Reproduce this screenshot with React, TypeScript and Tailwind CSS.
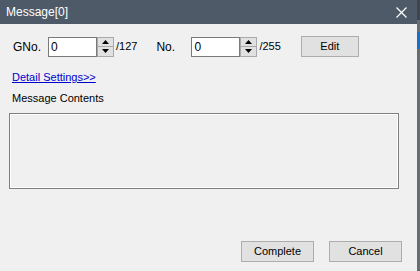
import { useState } from 'react';

function Spinner() {
  return (
    <div className="flex h-[20px] w-[17px] flex-col border border-[#a9a9a9] bg-[#e1e1e1]">
      <div className="flex flex-1 items-center justify-center border-b border-[#a9a9a9]">
        <svg width="7" height="4" viewBox="0 0 7 4">
          <path d="M3.5 0 L7 4 L0 4 Z" fill="#000" />
        </svg>
      </div>
      <div className="flex flex-1 items-center justify-center">
        <svg width="7" height="4" viewBox="0 0 7 4">
          <path d="M0 0 L7 0 L3.5 4 Z" fill="#000" />
        </svg>
      </div>
    </div>
  );
}

function NumberField({ value, max }: { value: string; max: number }) {
  return (
    <div className="flex items-center">
      <div className="flex h-[20px] w-[49px] items-center border border-[#7a7a7a] bg-white pl-[2px] text-[12px]">
        {value}
      </div>
      <Spinner />
      <span className="ml-[2px]">/{max}</span>
    </div>
  );
}

function WinButton({ label, width }: { label: string; width: string }) {
  return (
    <button
      className={`${width} flex h-[21px] items-center justify-center border border-[#adadad] bg-[#e1e1e1] text-black`}
    >
      {label}
    </button>
  );
}

export default function App() {
  const [gno] = useState('0');
  const [no] = useState('0');

  return (
    <div
      className="flex h-[271px] w-[420px] text-[11px] text-black"
      style={{ fontFamily: '"Liberation Sans", Arial, sans-serif' }}
    >
      <div className="flex w-[417px] flex-col bg-[#f0f0f0]">
        {/* Title bar */}
        <div className="flex h-[24px] items-center justify-between bg-[#4f5a68] pl-[6px] pr-[10px] text-[12px] text-white">
          <span>Message[0]</span>
          <svg width="11" height="11" viewBox="0 0 11 11">
            <path d="M0.5 0.5 L10.5 10.5 M10.5 0.5 L0.5 10.5" stroke="#fff" strokeWidth="1.2" />
          </svg>
        </div>

        {/* Body */}
        <div className="flex flex-1 flex-col pl-[12px] pr-[15px]">
          <div className="mt-[12px] flex items-center">
            <span className="w-[36px] pl-[1px] text-[12px]">GNo.</span>
            <NumberField value={gno} max={127} />
            <span className="ml-[19px] w-[35px] text-[12px]">No.</span>
            <NumberField value={no} max={255} />
            <div className="ml-[20px]">
              <WinButton label="Edit" width="w-[58px]" />
            </div>
          </div>

          <a href="#" className="mt-[12px] w-fit text-[#0000cc] underline">
            Detail Settings&gt;&gt;
          </a>

          <div className="mt-[4px]">Message Contents</div>

          <div className="mt-[7px] ml-[-3px] h-[76px] w-[390px] border border-[#808080] bg-[#f0f0f0] shadow-[inset_1px_1px_0_#ffffff,inset_-1px_-1px_0_#ffffff]" />

          <div className="mt-auto mb-[9px] flex justify-end gap-[15px]">
            <WinButton label="Complete" width="w-[73px]" />
            <WinButton label="Cancel" width="w-[73px]" />
          </div>
        </div>
      </div>

      {/* Desktop strip beyond the window */}
      <div className="flex w-[3px] flex-col bg-[#6a6d70]">
        <div className="h-[20px] bg-[#3d4650]" />
        <div className="mt-[12px] h-[17px] bg-[#1a6fc4]" />
      </div>
    </div>
  );
}
